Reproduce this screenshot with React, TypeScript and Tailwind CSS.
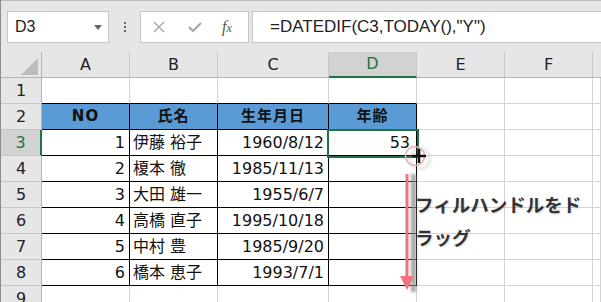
import React from "react";

const cols = "grid grid-cols-[41px_88px_88px_111px_88px_88px_88px_1fr]";
const font = "font-['DejaVu_Sans','Noto_Sans_CJK_JP',sans-serif]";

const people = [
    ["1", "伊藤 裕子", "1960/8/12", "53"],
    ["2", "榎本 徹", "1985/11/13", ""],
    ["3", "大田 雄一", "1955/6/7", ""],
    ["4", "高橋 直子", "1995/10/18", ""],
    ["5", "中村 豊", "1985/9/20", ""],
    ["6", "橋本 恵子", "1993/7/1", ""],
];

function RowHead({ n, active = false }: { n: number; active?: boolean }) {
    return (
        <div
            className={
                active
                    ? "flex items-center justify-center bg-[#d2d2d2] text-[#217346] border-r-2 border-r-[#217346] border-b border-b-[#c6c6c6]"
                    : "flex items-center justify-center bg-[#e6e6e6] text-[#222] border-r border-r-[#b4b4b4] border-b border-b-[#c6c6c6]"
            }
        >
            {n}
        </div>
    );
}

function Blank({ n }: { n: number }) {
    return (
        <>
            {Array.from({ length: n }).map((_, i) => (
                <div key={i} className="border-r border-b border-[#d4d4d4]" />
            ))}
        </>
    );
}

export default function App() {
    return (
        <div className={`w-[601px] h-[302px] overflow-hidden bg-white border-l border-[#8c8c8c] text-[16px] text-[#111] ${font}`}>
            {/* formula bar */}
            <div className="h-[52px] bg-[#e6e6e6] border-t border-[#bdbdbd] flex items-start pt-[10px] font-['Liberation_Sans',sans-serif]">
                <div className="ml-[6px] w-[102px] h-[32px] bg-white border border-[#c6c6c6] flex items-center pl-[7px] pr-[6px] justify-between">
                    <span className="text-[16px] text-[#222]">D3</span>
                    <span className="w-0 h-0 border-l-[4px] border-r-[4px] border-t-[5px] border-l-transparent border-r-transparent border-t-[#666]" />
                </div>
                <div className="w-[31px] h-[32px] flex flex-col items-center justify-center gap-[2px]">
                    <span className="w-[2px] h-[2px] bg-[#666]" />
                    <span className="w-[2px] h-[2px] bg-[#666]" />
                    <span className="w-[2px] h-[2px] bg-[#666]" />
                </div>
                <div className="w-[109px] h-[32px] bg-white border border-[#c6c6c6] flex items-center">
                    <svg width="12" height="12" viewBox="0 0 12 12" className="ml-[12px]">
                        <path d="M1 1 L11 11 M11 1 L1 11" stroke="#a6a6a6" strokeWidth="1.4" />
                    </svg>
                    <svg width="14" height="12" viewBox="0 0 14 12" className="ml-[23px]">
                        <path d="M1 6 L5 10 L13 2" stroke="#a6a6a6" strokeWidth="2.2" fill="none" />
                    </svg>
                    <span className="ml-[20px] text-[16px] italic text-[#555] font-['Liberation_Serif',serif] leading-none">
                        f<span className="text-[12px]">x</span>
                    </span>
                </div>
                <div className="ml-[3px] flex-1 h-[32px] bg-white border border-r-0 border-[#c6c6c6] flex items-center pl-[17px]">
                    <span className="text-[17px] text-[#222]">=DATEDIF(C3,TODAY(),"Y")</span>
                </div>
            </div>

            {/* sheet */}
            <div className="relative">
                <div className={`${cols} h-[26px] bg-[#e6e6e6] text-[#222]`}>
                    <div className="border-r border-b border-[#b4b4b4] flex items-end justify-end pr-[3px] pb-[2px]">
                        <div className="w-0 h-0 border-l-[17px] border-l-transparent border-b-[17px] border-b-[#bcbcbc]" />
                    </div>
                    {["A", "B", "C"].map((c) => (
                        <div key={c} className="border-r border-r-[#c6c6c6] border-b border-b-[#b4b4b4] flex items-center justify-center">{c}</div>
                    ))}
                    <div className="bg-[#d2d2d2] text-[#217346] border-r border-r-[#c6c6c6] border-b-2 border-b-[#217346] flex items-center justify-center">D</div>
                    {["E", "F"].map((c) => (
                        <div key={c} className="border-r border-r-[#c6c6c6] border-b border-b-[#b4b4b4] flex items-center justify-center">{c}</div>
                    ))}
                    <div className="border-b border-b-[#b4b4b4]" />
                </div>

                {/* row 1 */}
                <div className={`${cols} h-[26px]`}>
                    <RowHead n={1} />
                    <div className="border-r border-r-[#d4d4d4] border-b border-b-black" />
                    <div className="border-r border-r-[#d4d4d4] border-b border-b-black" />
                    <div className="border-r border-r-[#d4d4d4] border-b border-b-black" />
                    <div className="border-r border-r-[#d4d4d4] border-b border-b-black" />
                    <Blank n={3} />
                </div>

                {/* row 2 header */}
                <div className={`${cols} h-[26px]`}>
                    <RowHead n={2} />
                    {["NO", "氏名", "生年月日", "年齢"].map((h) => (
                        <div key={h} className="bg-[#5b9bd5] border-r border-b border-black flex items-center justify-center font-bold text-[15px] tracking-[1px]">
                            {h}
                        </div>
                    ))}
                    <Blank n={3} />
                </div>

                {people.map((p, i) => (
                    <div key={p[0]} className={`${cols} h-[26px]`}>
                        <RowHead n={i + 3} active={i === 0} />
                        <div className="border-r border-b border-black flex items-center justify-end pr-[4px]">{p[0]}</div>
                        <div className="border-r border-b border-black flex items-center pl-[3px] whitespace-nowrap">{p[1]}</div>
                        <div className="border-r border-b border-black flex items-center justify-end pr-[4px]">{p[2]}</div>
                        <div className="border-r border-b border-black flex items-center justify-end pr-[6px]">{p[3]}</div>
                        <Blank n={3} />
                    </div>
                ))}

                <div className={`${cols} h-[26px]`}>
                    <RowHead n={9} />
                    <Blank n={7} />
                </div>

                {/* selection D3 */}
                <div className="absolute left-[326px] top-[77px] w-[92px] h-[29px] border-2 border-[#217346] pointer-events-none" />

                {/* drag arrow + cursor */}
                <svg className="absolute left-[385px] top-[88px]" width="50" height="160" viewBox="0 0 50 160">
                    <defs>
                        <filter id="sh" x="-50%" y="-50%" width="200%" height="200%">
                            <feGaussianBlur stdDeviation="1.6" />
                        </filter>
                    </defs>
                    <rect x="25" y="34" width="5" height="118" fill="#8f8f8f" filter="url(#sh)" opacity="0.8" />
                    <rect x="19.5" y="34" width="3" height="104" fill="#ef7480" />
                    <path d="M14 136 L28 136 L21 150 Z" fill="#ef7480" />
                    <circle cx="32" cy="17" r="10" fill="none" stroke="#9a9a9a" strokeWidth="2" opacity="0.35" filter="url(#sh)" transform="translate(2 2)" />
                    <circle cx="29" cy="16" r="9.5" fill="none" stroke="#f2aab0" strokeWidth="1.6" />
                    <path d="M33 9 V23 M26 16 H40" stroke="#111" strokeWidth="2.6" />
                </svg>

                <div className="absolute left-[414px] top-[136px] w-[186px] text-[18.5px] leading-[33px] font-bold text-[#333] font-['Noto_Sans_CJK_JP',sans-serif] [text-shadow:1px_1px_2px_rgba(0,0,0,0.15)]">
                    フィルハンドルをド
                    <br />
                    ラッグ
                </div>
            </div>
        </div>
    );
}
